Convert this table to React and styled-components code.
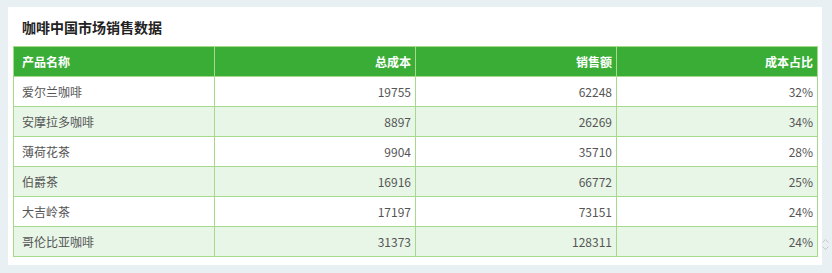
import React from "react";
import styled, { createGlobalStyle } from "styled-components";

const Global = createGlobalStyle`
  html, body { margin: 0; padding: 0; background: #e9f0f3; }
  body { font-family: "Noto Sans CJK SC", "Noto Sans", sans-serif; }
`;

const Page = styled.div`
  display: flex;
  width: 832px;
  height: 273px;
  box-sizing: border-box;
  padding: 7px 0 8px 8px;
`;

const Card = styled.div`
  width: 814px;
  background: #fff;
  box-sizing: border-box;
  padding: 0 4px 0 5px;
`;

const Title = styled.h2`
  margin: 0;
  padding: 10px 0 9px 9px;
  font-size: 14px;
  line-height: 20px;
  font-weight: 700;
  color: #222;
`;

const Table = styled.table`
  width: 805px;
  border-collapse: collapse;
  table-layout: fixed;
  font-size: 12px;
`;

const Th = styled.th`
  height: 29px;
  padding: 0 ${(p) => (p.$align === "right" ? "4px" : "0")} 0 ${(p) => (p.$align === "right" ? "0" : "8px")};
  background: #3aad37;
  color: #fff;
  font-weight: 700;
  text-align: ${(p) => p.$align || "left"};
  border: 1px solid #a6d98c;
  line-height: 16px;
`;

const Row = styled.tr`
  background: ${(p) => (p.$alt ? "#e8f6e7" : "#fff")};
`;

const Td = styled.td`
  height: 29px;
  padding: 0 ${(p) => (p.$align === "right" ? "4px" : "0")} 0 ${(p) => (p.$align === "right" ? "0" : "8px")};
  color: #555;
  text-align: ${(p) => p.$align || "left"};
  border: 1px solid #a6d98c;
  line-height: 16px;
`;

const Side = styled.div`
  width: 7px;
  display: flex;
  flex-direction: column;
  justify-content: flex-end;
  align-items: center;
  padding-bottom: 13px;
`;

const Spinner = () => (
  <svg width="7" height="15" viewBox="0 0 7 15" fill="none" stroke="#c4c8cc" strokeWidth="1">
    <path d="M0.5 5.5 L3.5 2.5 L6.5 5.5" />
    <path d="M0.5 9.5 L3.5 12.5 L6.5 9.5" />
  </svg>
);

const data = [
  ["爱尔兰咖啡", 19755, 62248, "32%"],
  ["安摩拉多咖啡", 8897, 26269, "34%"],
  ["薄荷花茶", 9904, 35710, "28%"],
  ["伯爵茶", 16916, 66772, "25%"],
  ["大吉岭茶", 17197, 73151, "24%"],
  ["哥伦比亚咖啡", 31373, 128311, "24%"],
];

export default function App() {
  return (
    <>
      <Global />
      <Page>
        <Card>
          <Title>咖啡中国市场销售数据</Title>
          <Table>
            <thead>
              <tr>
                <Th>产品名称</Th>
                <Th $align="right">总成本</Th>
                <Th $align="right">销售额</Th>
                <Th $align="right">成本占比</Th>
              </tr>
            </thead>
            <tbody>
              {data.map((r, i) => (
                <Row key={r[0]} $alt={i % 2 === 1}>
                  <Td>{r[0]}</Td>
                  <Td $align="right">{r[1]}</Td>
                  <Td $align="right">{r[2]}</Td>
                  <Td $align="right">{r[3]}</Td>
                </Row>
              ))}
            </tbody>
          </Table>
        </Card>
        <Side>
          <Spinner />
        </Side>
      </Page>
    </>
  );
}
